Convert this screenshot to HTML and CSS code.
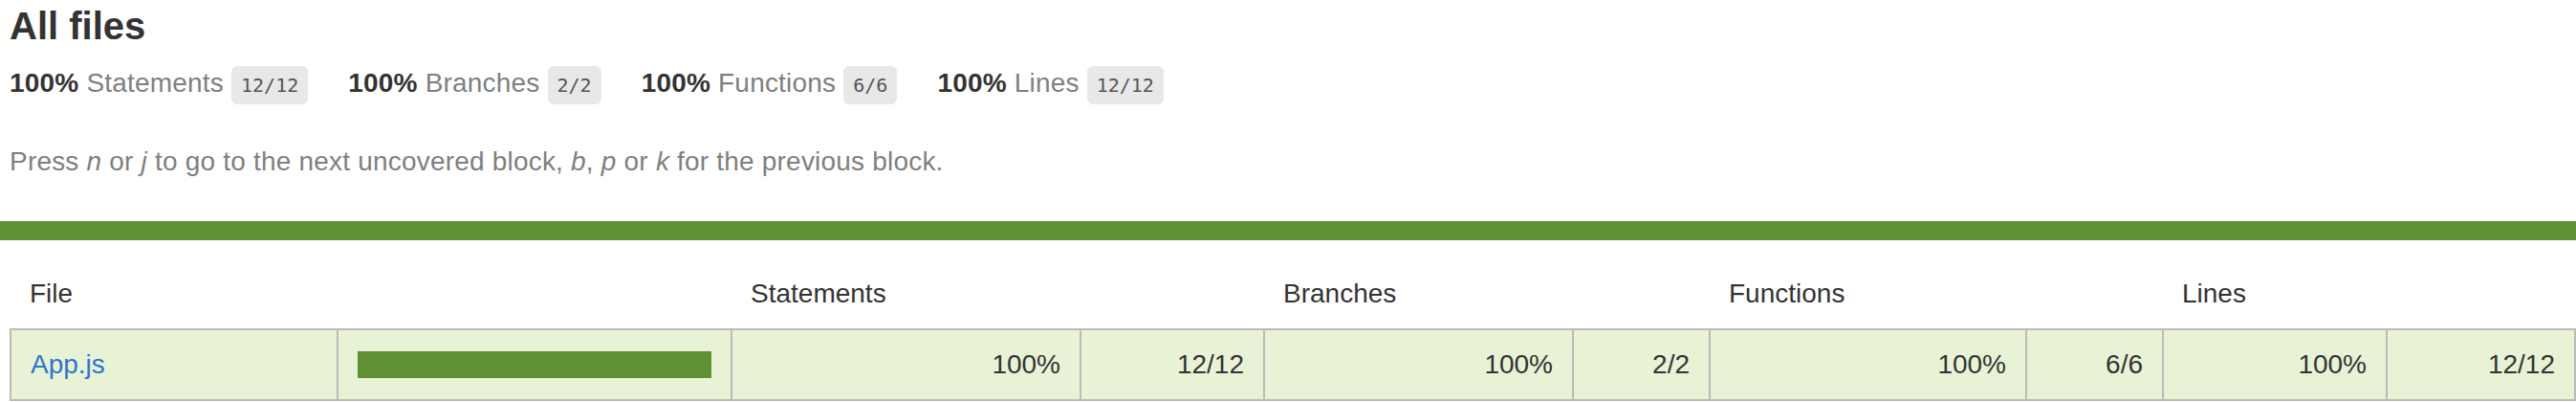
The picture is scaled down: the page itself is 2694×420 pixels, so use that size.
FILE: index.html
```html
<!doctype html>
<html lang="en">
<head>
<meta charset="utf-8">
<title>Code coverage report for All files</title>
<link rel="stylesheet" href="styles.css">
</head>
<body>
<div class="wrapper">
  <div class="summary">
    <h1>All files</h1>
    <div class="stats">
      <div class="stat"><span class="strong">100% </span> <span class="quiet">Statements</span> <span class="fraction">12/12</span></div>
      <div class="stat"><span class="strong">100% </span> <span class="quiet">Branches</span> <span class="fraction">2/2</span></div>
      <div class="stat"><span class="strong">100% </span> <span class="quiet">Functions</span> <span class="fraction">6/6</span></div>
      <div class="stat"><span class="strong">100% </span> <span class="quiet">Lines</span> <span class="fraction">12/12</span></div>
    </div>
    <p class="quiet hint">Press <em>n</em> or <em>j</em> to go to the next uncovered block, <em>b</em>, <em>p</em> or <em>k</em> for the previous block.</p>
  </div>
  <div class="status-line high"></div>
  <div class="table-wrap">
    <table class="coverage-summary">
      <colgroup>
        <col class="w-file">
        <col class="w-pic">
        <col class="w-pct1">
        <col class="w-abs1">
        <col class="w-pct2">
        <col class="w-abs2">
        <col class="w-pct3">
        <col class="w-abs3">
        <col class="w-pct4">
        <col class="w-abs4">
      </colgroup>
      <thead>
        <tr>
          <th class="file">File</th>
          <th class="pic"></th>
          <th class="pct">Statements</th>
          <th class="abs"></th>
          <th class="pct">Branches</th>
          <th class="abs"></th>
          <th class="pct">Functions</th>
          <th class="abs"></th>
          <th class="pct">Lines</th>
          <th class="abs"></th>
        </tr>
      </thead>
      <tbody>
        <tr>
          <td class="file high"><a href="#">App.js</a></td>
          <td class="pic high"><div class="chart"><div class="cover-fill"></div></div></td>
          <td class="pct high">100%</td>
          <td class="abs high">12/12</td>
          <td class="pct high">100%</td>
          <td class="abs high">2/2</td>
          <td class="pct high">100%</td>
          <td class="abs high">6/6</td>
          <td class="pct high">100%</td>
          <td class="abs high">12/12</td>
        </tr>
      </tbody>
    </table>
  </div>
</div>
</body>
</html>
```

FILE: styles.css
```css
*, *::before, *::after { box-sizing: border-box; }
html, body { margin: 0; padding: 0; }
html { overflow: hidden; }
body {
  font-family: "Liberation Sans", Arial, Helvetica, sans-serif;
  font-size: 28px;
  color: #333;
  background: #fff;
}

.summary {
  padding: 3px 20px 18px 10px;
  letter-spacing: 0.2px;
}

h1 {
  font-size: 40px;
  line-height: 48px;
  margin: 0;
  font-weight: bold;
  letter-spacing: 0;
}

.stats { display: flex; }
.stat {
  padding: 20px 42px 20px 0;
  line-height: 32px;
  white-space: nowrap;
}

.strong { font-weight: bold; }
.quiet { color: #7f7f7f; }

.fraction {
  font-family: "DejaVu Sans Mono", "Liberation Mono", monospace;
  font-size: 20px;
  letter-spacing: 0;
  color: #555;
  background: #e8e8e8;
  padding: 8px 10px;
  border-radius: 6px;
  vertical-align: middle;
}

.hint { margin: 28px 0; line-height: 32px; }

.status-line { height: 20px; }
.status-line.high { background: #5f9034; }

.table-wrap { padding: 20px 0 20px 10px; }

.coverage-summary {
  border-collapse: collapse;
  width: 100%;
  table-layout: fixed;
}
.w-file { width: 342px; }
.w-pic { width: 412px; }
.w-pct1 { width: 365px; }
.w-abs1 { width: 192px; }
.w-pct2 { width: 323px; }
.w-abs2 { width: 143px; }
.w-pct3 { width: 331px; }
.w-abs3 { width: 143px; }
.w-pct4 { width: 234px; }

.coverage-summary tr { border-bottom: 2px solid #bbb; }
.coverage-summary tbody { border: 2px solid #bbb; }
.coverage-summary td,
.coverage-summary th {
  padding: 20px;
  line-height: 32px;
  white-space: nowrap;
}
.coverage-summary td { border-right: 2px solid #bbb; }
.coverage-summary td:last-child { border-right: none; }
.coverage-summary th {
  text-align: left;
  font-weight: normal;
}
.coverage-summary td.pct,
.coverage-summary td.abs { text-align: right; }

.high { background: #e8f3d5; }

a { color: #2e74d2; text-decoration: none; }

.chart { line-height: 0; }
.cover-fill {
  height: 28px;
  width: 100%;
  background: #5f9034;
}
```
